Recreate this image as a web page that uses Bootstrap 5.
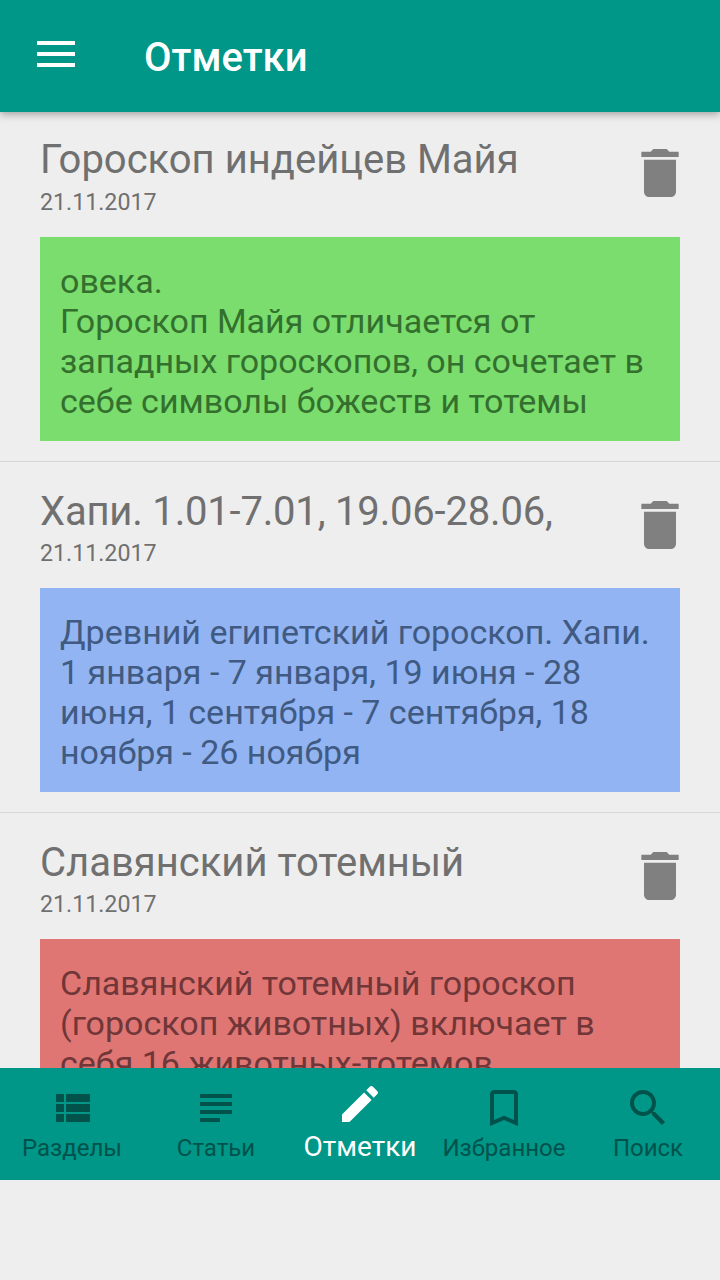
<!DOCTYPE html>
<html lang="ru">
<head>
<meta charset="utf-8">
<link href="https://cdn.jsdelivr.net/npm/bootstrap@5.3.0/dist/css/bootstrap.min.css" rel="stylesheet">
<style>
body{background:#eee;font-family:Roboto,"Liberation Sans",sans-serif;height:1280px;overflow:hidden}
.app-frame{height:1180px}
.top-bar{height:112px;background:#009688;box-shadow:0 2px 8px rgba(0,0,0,.35);z-index:2;color:#fff}
.menu-icon{margin-left:37px;width:38px;height:26px;margin-top:-4px}
.top-title{font-size:40px;font-weight:500;margin-left:69px;line-height:1;margin-top:4px}
.note-list{height:957px;margin-top:-1px;overflow:hidden}
.note-item{height:351px;padding:29px 40px 20px;border-bottom:1px solid #d6d6d6;color:#707070}
.note-head{height:97px}
.note-title{font-size:40px;line-height:40px;margin:0;font-weight:400;white-space:nowrap}
.note-date{font-size:23.2px;line-height:28px;margin-top:8px}
.note-item + .note-item{padding-top:30px}
.note-item + .note-item .note-head{height:96px}
.note-item + .note-item .note-date{margin-top:7px}
.title-digits{letter-spacing:-.19px}
.trash{width:64px;height:64px;margin-right:-12px;margin-top:1px;fill:#808080}
.note-body{height:204px;padding:24px 20px 20px;font-size:34px;line-height:40px}
.note-green{background:#7bdd6d;color:#33702e}
.note-blue{background:#92b4f2;color:#405a82}
.note-red{background:#df7674;color:#703638}
.tab-bar{height:112px;background:#009688}
.tab-cell{width:144px;color:#00524b;fill:#00524b;padding-top:16px}
.tab-cell svg{width:48px;height:48px;display:block}
.tab-label{font-size:24px;line-height:30px;margin-top:1px;white-space:nowrap}
.tab-active{color:#fff;fill:#fff;padding-top:12px}
.tab-active .tab-label{font-size:28px;margin-top:4px}
</style>
</head>
<body class="m-0">
<div class="app-frame d-flex flex-column">
  <header class="top-bar d-flex align-items-center position-relative flex-shrink-0">
    <svg class="menu-icon" viewBox="0 0 38 26" fill="#fff"><rect width="38" height="4" y="0"/><rect width="38" height="4" y="11"/><rect width="38" height="4" y="22"/></svg>
    <div class="top-title">Отметки</div>
  </header>
  <main class="note-list flex-shrink-0">
    <section class="note-item">
      <div class="note-head d-flex justify-content-between align-items-start">
        <div><h2 class="note-title">Гороскоп индейцев Майя</h2><div class="note-date">21.11.2017</div></div>
        <svg class="trash" viewBox="0 0 24 24"><path d="M6 19c0 1.1.9 2 2 2h8c1.1 0 2-.9 2-2V7H6v12zM19 4h-3.5l-1-1h-5l-1 1H5v2h14V4z"/></svg>
      </div>
      <div class="note-body note-green">овека.<br>Гороскоп Майя отличается от<br>западных гороскопов, он сочетает в<br>себе символы божеств и тотемы</div>
    </section>
    <section class="note-item">
      <div class="note-head d-flex justify-content-between align-items-start">
        <div><h2 class="note-title title-digits">Хапи. 1.01-7.01, 19.06-28.06,</h2><div class="note-date">21.11.2017</div></div>
        <svg class="trash" viewBox="0 0 24 24"><path d="M6 19c0 1.1.9 2 2 2h8c1.1 0 2-.9 2-2V7H6v12zM19 4h-3.5l-1-1h-5l-1 1H5v2h14V4z"/></svg>
      </div>
      <div class="note-body note-blue">Древний египетский гороскоп. Хапи.<br>1 января - 7 января, 19 июня - 28<br>июня, 1 сентября - 7 сентября, 18<br>ноября - 26 ноября</div>
    </section>
    <section class="note-item">
      <div class="note-head d-flex justify-content-between align-items-start">
        <div><h2 class="note-title">Славянский тотемный</h2><div class="note-date">21.11.2017</div></div>
        <svg class="trash" viewBox="0 0 24 24"><path d="M6 19c0 1.1.9 2 2 2h8c1.1 0 2-.9 2-2V7H6v12zM19 4h-3.5l-1-1h-5l-1 1H5v2h14V4z"/></svg>
      </div>
      <div class="note-body note-red">Славянский тотемный гороскоп<br>(гороскоп животных) включает в<br>себя 16 животных-тотемов</div>
    </section>
  </main>
  <nav class="tab-bar d-flex flex-shrink-0">
    <div class="tab-cell d-flex flex-column align-items-center"><svg viewBox="0 0 24 24"><path d="M4 14h4v-4H4v4zm0 5h4v-4H4v4zM4 9h4V5H4v4zm5 5h12v-4H9v4zm0 5h12v-4H9v4zM9 5v4h12V5H9z"/></svg><div class="tab-label">Разделы</div></div>
    <div class="tab-cell d-flex flex-column align-items-center"><svg viewBox="0 0 24 24"><path d="M14 17H4v2h10v-2zm6-8H4v2h16V9zM4 15h16v-2H4v2zM4 5v2h16V5H4z"/></svg><div class="tab-label">Статьи</div></div>
    <div class="tab-cell tab-active d-flex flex-column align-items-center"><svg viewBox="0 0 24 24"><path d="M3 17.25V21h3.75L17.81 9.94l-3.75-3.75L3 17.25zM20.71 7.04c.39-.39.39-1.02 0-1.41l-2.34-2.34c-.39-.39-1.02-.39-1.41 0l-1.83 1.83 3.75 3.75 1.83-1.83z"/></svg><div class="tab-label">Отметки</div></div>
    <div class="tab-cell d-flex flex-column align-items-center"><svg viewBox="0 0 24 24"><path d="M17 3H7c-1.1 0-1.99.9-1.99 2L5 21l7-3 7 3V5c0-1.1-.9-2-2-2zm0 15l-5-2.18L7 18V5h10v13z"/></svg><div class="tab-label">Избранное</div></div>
    <div class="tab-cell d-flex flex-column align-items-center"><svg viewBox="0 0 24 24"><path d="M15.5 14h-.79l-.28-.27C15.41 12.59 16 11.11 16 9.5 16 5.91 13.09 3 9.5 3S3 5.91 3 9.5 5.91 16 9.5 16c1.61 0 3.09-.59 4.23-1.57l.27.28v.79l5 4.99L20.49 19l-4.99-5zm-6 0C7.01 14 5 11.99 5 9.5S7.01 5 9.5 5 14 7.01 14 9.5 11.99 14 9.5 14z"/></svg><div class="tab-label">Поиск</div></div>
  </nav>
</div>
<script src="https://cdn.jsdelivr.net/npm/bootstrap@5.3.0/dist/js/bootstrap.bundle.min.js"></script>
</body>
</html>
